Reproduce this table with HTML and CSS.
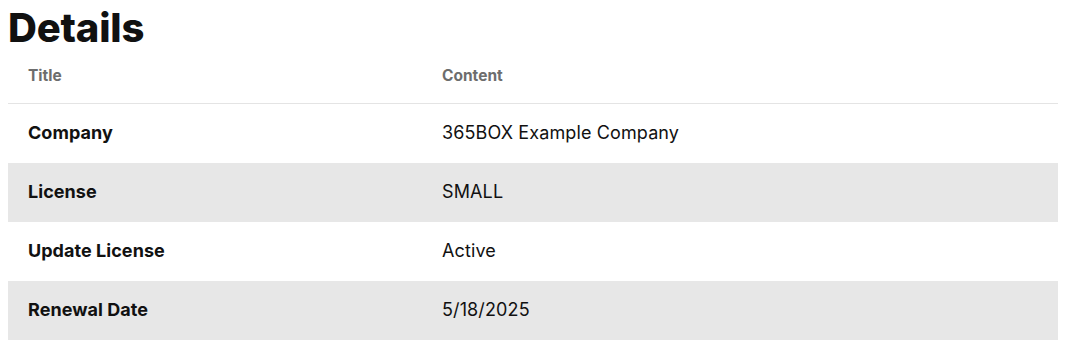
FILE: index.html
```html
<!DOCTYPE html>
<html lang="en">
<head>
<meta charset="utf-8">
<title>Details</title>
<link rel="stylesheet" href="styles.css">
</head>
<body>
<section class="details">
  <h1 class="details-title">Details</h1>
  <table class="details-table">
    <colgroup>
      <col class="col-title">
      <col class="col-content">
    </colgroup>
    <thead>
      <tr>
        <th>Title</th>
        <th>Content</th>
      </tr>
    </thead>
    <tbody>
      <tr>
        <td class="label">Company</td>
        <td>365BOX Example Company</td>
      </tr>
      <tr class="alt">
        <td class="label">License</td>
        <td>SMALL</td>
      </tr>
      <tr>
        <td class="label">Update License</td>
        <td>Active</td>
      </tr>
      <tr class="alt">
        <td class="label">Renewal Date</td>
        <td>5/18/2025</td>
      </tr>
    </tbody>
  </table>
</section>
</body>
</html>
```

FILE: styles.css
```css
html, body {
  background: #ffffff;
}
body {
  margin: 8px 22px 8px 8px;
  font-family: Inter, "Noto Sans", sans-serif;
  color: #111111;
}
.details-title {
  margin: 0;
  font-size: 40px;
  line-height: 40px;
  font-weight: 800;
  letter-spacing: -0.2px;
  color: #111111;
}
.details-table {
  width: 100%;
  border-collapse: collapse;
  margin-top: -2px;
}
.col-title {
  width: 414px;
}
.details-table th {
  text-align: left;
  font-size: 15.5px;
  line-height: 20px;
  font-weight: 700;
  color: #6d6d6d;
  padding: 20px 20px 17px 20px;
  border-bottom: 1px solid #e4e4e4;
}
.details-table td {
  font-size: 18px;
  line-height: 22px;
  padding: 0 20px;
  height: 59px;
  box-sizing: border-box;
  color: #111111;
  letter-spacing: 0.12px;
}
.details-table td.label {
  font-weight: 700;
  letter-spacing: 0.05px;
}
.details-table tr.alt td {
  background: #e7e7e7;
}
```
